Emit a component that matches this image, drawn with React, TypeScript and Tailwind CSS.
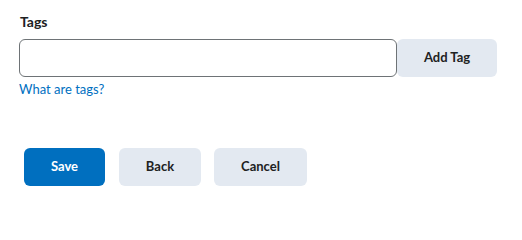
import React from "react";

export default function App() {
  return (
    <div className="w-[522px] h-[206px] bg-white font-['Lato',sans-serif] text-[#202122] pl-[19px] pt-[12px]">
      <div className="text-[14px] font-bold leading-[20px] pl-[1px]">Tags</div>
      <div className="flex mt-[7px]">
        <input
          type="text"
          className="w-[378px] h-[38px] border border-[#6e7376] rounded-[6px] outline-none px-3 text-[14px]"
        />
        <button className="w-[100px] h-[38px] bg-[#e3e9f1] rounded-[6px] text-[13px] font-bold text-[#202122]">
          Add Tag
        </button>
      </div>
      <a href="#" className="block text-[13px] leading-[18px] text-[#006fbf] mt-[3px] w-fit">
        What are tags?
      </a>
      <div className="flex mt-[50px] pl-[5px]">
        <button className="w-[81px] h-[38px] bg-[#006fbf] rounded-[6px] text-[13px] font-bold text-white">
          Save
        </button>
        <button className="ml-[14px] w-[82px] h-[38px] bg-[#e3e9f1] rounded-[6px] text-[13px] font-bold text-[#202122]">
          Back
        </button>
        <button className="ml-[13px] w-[93px] h-[38px] bg-[#e3e9f1] rounded-[6px] text-[13px] font-bold text-[#202122]">
          Cancel
        </button>
      </div>
    </div>
  );
}
